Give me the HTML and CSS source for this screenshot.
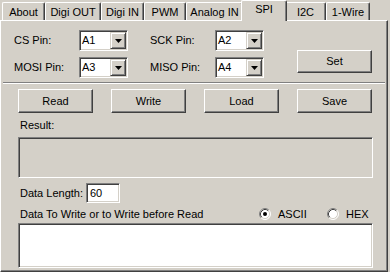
FILE: index.html
```html
<!DOCTYPE html>
<html>
<head>
<meta charset="utf-8">
<link rel="stylesheet" href="styles.css">
</head>
<body>
<div class="tabs">
  <div class="tab t-about">About</div>
  <div class="tab t-dout">Digi OUT</div>
  <div class="tab t-din">Digi IN</div>
  <div class="tab t-pwm">PWM</div>
  <div class="tab t-ain">Analog IN</div>
  <div class="tab t-spi active">SPI</div>
  <div class="tab t-i2c">I2C</div>
  <div class="tab t-wire">1-Wire</div>
</div>
<div class="panel">
  <div class="pins">
    <div class="pin-grid">
      <span class="lbl">CS Pin:</span>
      <div class="combo"><span class="val">A1</span><span class="drop"><svg width="7" height="4" viewBox="0 0 7 4"><polygon points="0,0 7,0 3.5,4" fill="#000"/></svg></span></div>
      <span class="lbl">SCK Pin:</span>
      <div class="combo"><span class="val">A2</span><span class="drop"><svg width="7" height="4" viewBox="0 0 7 4"><polygon points="0,0 7,0 3.5,4" fill="#000"/></svg></span></div>
      <span class="lbl">MOSI Pin:</span>
      <div class="combo"><span class="val">A3</span><span class="drop"><svg width="7" height="4" viewBox="0 0 7 4"><polygon points="0,0 7,0 3.5,4" fill="#000"/></svg></span></div>
      <span class="lbl">MISO Pin:</span>
      <div class="combo"><span class="val">A4</span><span class="drop"><svg width="7" height="4" viewBox="0 0 7 4"><polygon points="0,0 7,0 3.5,4" fill="#000"/></svg></span></div>
    </div>
    <button class="btn set">Set</button>
  </div>
  <div class="sep"></div>
  <div class="lower">
    <div class="btn-row">
      <button class="btn">Read</button>
      <button class="btn">Write</button>
      <button class="btn">Load</button>
      <button class="btn">Save</button>
    </div>
    <div class="result-lbl">Result:</div>
    <div class="sunken result-box"></div>
    <div class="len-row">
      <span class="len-lbl">Data Length:</span>
      <div class="sunken field">60</div>
    </div>
    <div class="write-row">
      <span class="write-lbl">Data To Write or to Write before Read</span>
      <div class="radio-item ascii">
        <svg width="12" height="12" viewBox="0 0 12 12">
          <circle cx="6" cy="6" r="5" fill="#fff"/>
          <path d="M2.11 9.89 A5.5 5.5 0 0 1 9.89 2.11" fill="none" stroke="#808080" stroke-width="1"/>
          <path d="M9.89 2.11 A5.5 5.5 0 0 1 2.11 9.89" fill="none" stroke="#fff" stroke-width="1"/>
          <path d="M2.82 9.18 A4.5 4.5 0 0 1 9.18 2.82" fill="none" stroke="#404040" stroke-width="1"/>
          <path d="M9.18 2.82 A4.5 4.5 0 0 1 2.82 9.18" fill="none" stroke="#d4d0c8" stroke-width="1"/>
          <circle cx="6" cy="6" r="2" fill="#000"/>
        </svg>
        <span>ASCII</span>
      </div>
      <div class="radio-item">
        <svg width="12" height="12" viewBox="0 0 12 12">
          <circle cx="6" cy="6" r="5" fill="#fff"/>
          <path d="M2.11 9.89 A5.5 5.5 0 0 1 9.89 2.11" fill="none" stroke="#808080" stroke-width="1"/>
          <path d="M9.89 2.11 A5.5 5.5 0 0 1 2.11 9.89" fill="none" stroke="#fff" stroke-width="1"/>
          <path d="M2.82 9.18 A4.5 4.5 0 0 1 9.18 2.82" fill="none" stroke="#404040" stroke-width="1"/>
          <path d="M9.18 2.82 A4.5 4.5 0 0 1 2.82 9.18" fill="none" stroke="#d4d0c8" stroke-width="1"/>
        </svg>
        <span>HEX</span>
      </div>
    </div>
    <div class="sunken textarea"></div>
  </div>
</div>
</body>
</html>
```
FILE: styles.css
```css
* { box-sizing: border-box; }
html, body { margin: 0; padding: 0; }
body {
  width: 390px;
  height: 272px;
  overflow: hidden;
  background: #d4d0c8;
  font-family: "Liberation Sans", Arial, sans-serif;
  font-size: 11px;
  line-height: 13px;
  color: #000;
}
.tabs {
  display: flex;
  align-items: flex-end;
  height: 20px;
  padding-left: 2px;
  position: relative;
  z-index: 2;
}
.tab {
  flex-shrink: 0;
  height: 18px;
  padding-top: 3px;
  text-align: center;
  background: #d4d0c8;
  border-top: 1px solid #fff;
  border-left: 1px solid #fff;
  border-right: 1px solid #404040;
  box-shadow: inset -1px 0 #808080;
  border-radius: 2px 2px 0 0;
  white-space: nowrap;
}
.t-about { width: 43px; }
.t-dout { width: 56px; }
.t-din { width: 43px; }
.t-pwm { width: 42px; }
.t-ain { width: 57px; }
.t-spi { width: 42px; }
.t-i2c { width: 41px; }
.t-wire { width: 44px; }
.tab.active {
  width: 46px;
  height: 21px;
  margin: 0 -2px -1px;
  padding-top: 2px;
  position: relative;
  z-index: 3;
}
.panel {
  width: 388px;
  height: 252px;
  border-top: 1px solid #fff;
  border-left: 1px solid #fff;
  border-right: 1px solid #404040;
  border-bottom: 1px solid #404040;
  box-shadow: inset -1px -1px #808080;
  position: relative;
  z-index: 1;
}
.pins {
  display: flex;
  align-items: flex-start;
  padding: 9px 0 0 13px;
}
.pin-grid {
  display: grid;
  grid-template-columns: 65px 71px 65px 49px;
  grid-auto-rows: 21px;
  row-gap: 6px;
}
.lbl { align-self: center; }
.combo {
  width: 49px;
  height: 21px;
  display: flex;
  align-items: stretch;
  padding: 1px;
  background: #fff;
  border: 1px solid;
  border-color: #808080 #fff #fff #808080;
  box-shadow: inset 1px 1px #404040, inset -1px -1px #d4d0c8;
}
.val {
  flex: 1;
  padding-left: 1px;
  align-self: center;
}
.drop {
  width: 16px;
  display: flex;
  align-items: center;
  justify-content: center;
  background: #d4d0c8;
  border: 1px solid;
  border-color: #d4d0c8 #404040 #404040 #d4d0c8;
  box-shadow: inset 1px 1px #fff, inset -1px -1px #808080;
}
.drop svg { display: block; }
.btn {
  flex-shrink: 0;
  width: 75px;
  height: 24px;
  padding: 0;
  margin: 0;
  font: inherit;
  color: #000;
  background: #d4d0c8;
  border: 1px solid;
  border-color: #fff #404040 #404040 #fff;
  box-shadow: inset -1px -1px #808080;
  border-radius: 0;
}
.set {
  height: 23px;
  margin: 20px 0 0 33px;
}
.sep {
  margin: 4px 2px 0;
  border-top: 1px solid #808080;
  border-bottom: 1px solid #fff;
}
.lower {
  padding-left: 17px;
  width: 372px;
}
.btn-row {
  display: flex;
  gap: 18px;
  margin-top: 5px;
}
.result-lbl {
  margin: 6px 0 0 2px;
}
.sunken {
  border: 1px solid;
  border-color: #808080 #fff #fff #808080;
  box-shadow: inset 1px 1px #404040, inset -1px -1px #d4d0c8;
}
.result-box {
  margin-top: 5px;
  width: 355px;
  height: 41px;
}
.len-row {
  display: flex;
  align-items: center;
  margin-top: 5px;
  height: 20px;
}
.len-lbl {
  flex-shrink: 0;
  width: 66px;
  margin-left: 2px;
}
.field {
  flex-shrink: 0;
  width: 34px;
  height: 20px;
  background: #fff;
  padding: 3px 0 0 3px;
}
.write-row {
  display: flex;
  align-items: center;
  height: 14px;
  margin-top: 4px;
}
.write-lbl {
  flex-shrink: 0;
  width: 239px;
  margin-left: 2px;
  white-space: nowrap;
}
.radio-item {
  flex-shrink: 0;
  display: flex;
  align-items: center;
  gap: 7px;
}
.radio-item.ascii { width: 68px; }
.radio-item svg { display: block; flex-shrink: 0; }
.textarea {
  margin-top: 2px;
  width: 355px;
  height: 45px;
  background: #fff;
}
```
